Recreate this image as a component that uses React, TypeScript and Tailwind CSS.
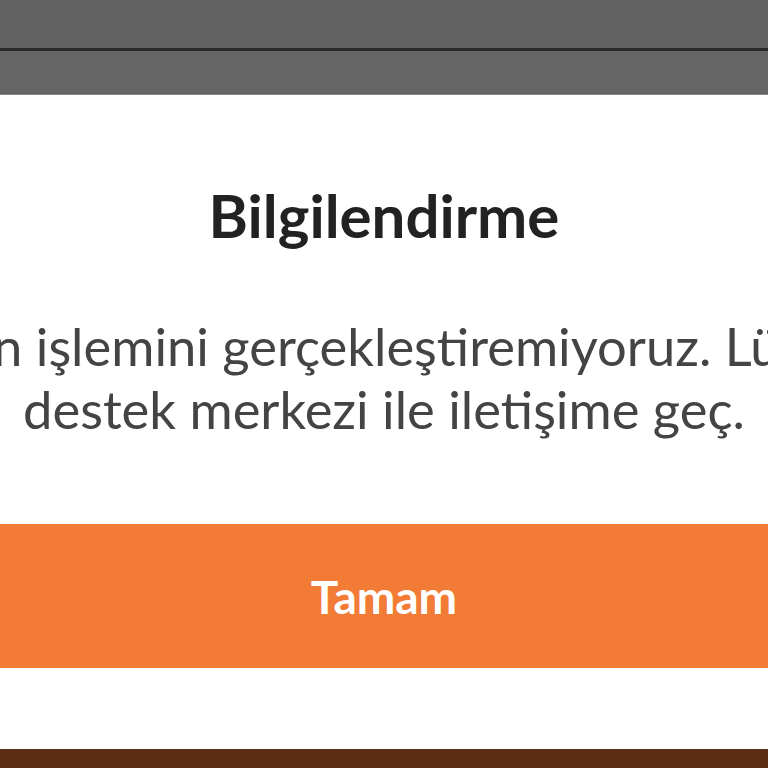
export default function App() {
    return (
        <div
            className="h-[768px] w-[768px] overflow-hidden flex flex-col bg-white"
            style={{ fontFamily: "Lato, 'Noto Sans', sans-serif" }}
        >
            {/* dimmed page behind the dialog */}
            <div className="h-[48px] bg-[#626262]" />
            <div className="h-[3px] bg-[#2b2b2b]" />
            <div className="h-[43px] bg-[#666666] border-b border-[#5e5e5e]" />
            <div className="h-px bg-[#8a8a8a]" />

            <div className="flex-1 flex flex-col bg-white">
                <h1 className="mt-[84px] text-center text-[60px] leading-[72px] font-bold text-[#222222]">
                    Bilgilendirme
                </h1>

                <div className="mt-[63px] text-[52.5px] leading-[63px] text-[#444444]">
                    <div className="flex justify-center whitespace-nowrap">Şu an işlemini gerçekleştiremiyoruz. Lütfen</div>
                    <div className="flex justify-center whitespace-nowrap">destek merkezi ile iletişime geç.</div>
                </div>

                <button className="mt-[84px] h-[144px] w-full bg-[#f27b35] text-white text-[46px] font-bold">
                    Tamam
                </button>

                <div className="flex-1" />
            </div>

            <div className="h-[19px] bg-[#5e2e14]" />
        </div>
    );
}
